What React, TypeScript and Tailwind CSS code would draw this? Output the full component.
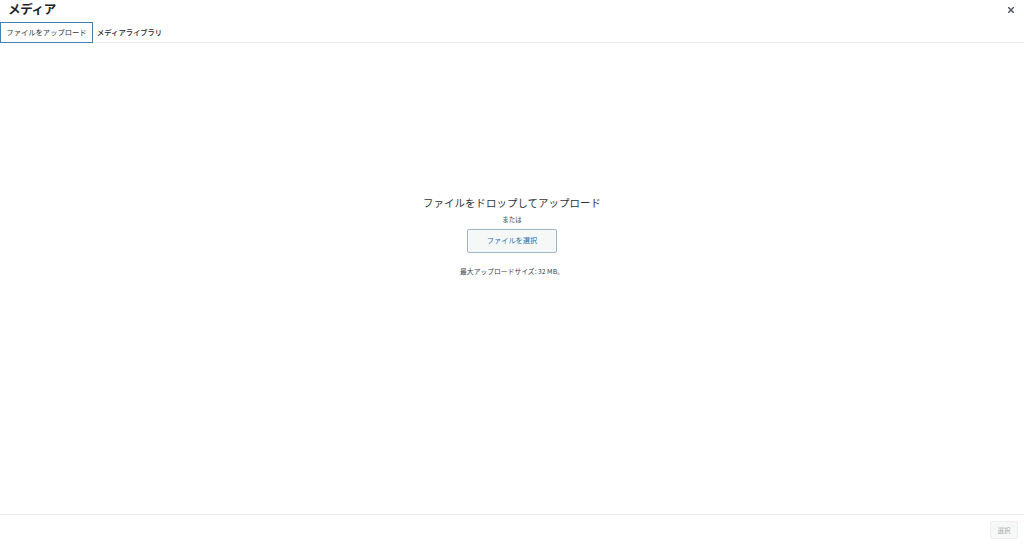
import React from 'react';

const font = { fontFamily: '"Noto Sans CJK JP", "Liberation Sans", sans-serif' };

export default function App() {
  return (
    <div className="w-[1024px] h-[545px] bg-white flex flex-col text-[#1d2327] overflow-hidden" style={font}>
      {/* Header */}
      <div className="relative h-[22px] flex items-start pt-[3px] pl-[8px]">
        <h1 className="text-[12.5px] font-bold leading-none tracking-tight">メディア</h1>
        <button className="absolute right-[8px] top-[5px] w-[10px] h-[10px] flex items-center justify-center text-[#50575e]">
          <svg viewBox="0 0 10 10" className="w-[6px] h-[6px]">
            <path d="M1 1 L9 9 M9 1 L1 9" stroke="currentColor" strokeWidth="2.4" strokeLinecap="square" />
          </svg>
        </button>
      </div>

      {/* Tabs */}
      <div className="flex items-stretch h-[21px] border-b border-[#ececec]">
        <button className="w-[93px] h-[21px] border-[1.5px] border-[#3f82b5] text-[7.3px] text-[#2c3338] flex items-center justify-center leading-none">
          ファイルをアップロード
        </button>
        <button className="px-[4px] h-[21px] text-[7.3px] font-medium text-[#1d2327] flex items-center leading-none">
          メディアライブラリ
        </button>
      </div>

      {/* Upload area */}
      <div className="flex-1 flex flex-col items-center pt-[155px]">
        <p className="text-[10.4px] leading-none text-[#2c3338] tracking-[0.1px]">ファイルをドロップしてアップロード</p>
        <p className="mt-[8px] text-[6.5px] leading-none text-[#3c434a]">または</p>
        <button className="mt-[6px] w-[90px] h-[24px] bg-[#f6f7f7] border border-[#9fb8c9] rounded-[2px] text-[7.2px] text-[#2271b1] flex items-center justify-center leading-none">
          ファイルを選択
        </button>
        <p className="mt-[15px] text-[6.8px] leading-none text-[#3c434a]">最大アップロードサイズ: 32 MB。</p>
      </div>

      {/* Footer */}
      <div className="h-[31px] border-t border-[#ececec] flex items-center justify-end pr-[6px]">
        <button className="w-[28px] h-[18px] bg-[#f6f7f7] border border-[#eeeeee] rounded-[2px] text-[6.5px] text-[#a7aaad] flex items-center justify-center leading-none">
          選択
        </button>
      </div>
    </div>
  );
}
